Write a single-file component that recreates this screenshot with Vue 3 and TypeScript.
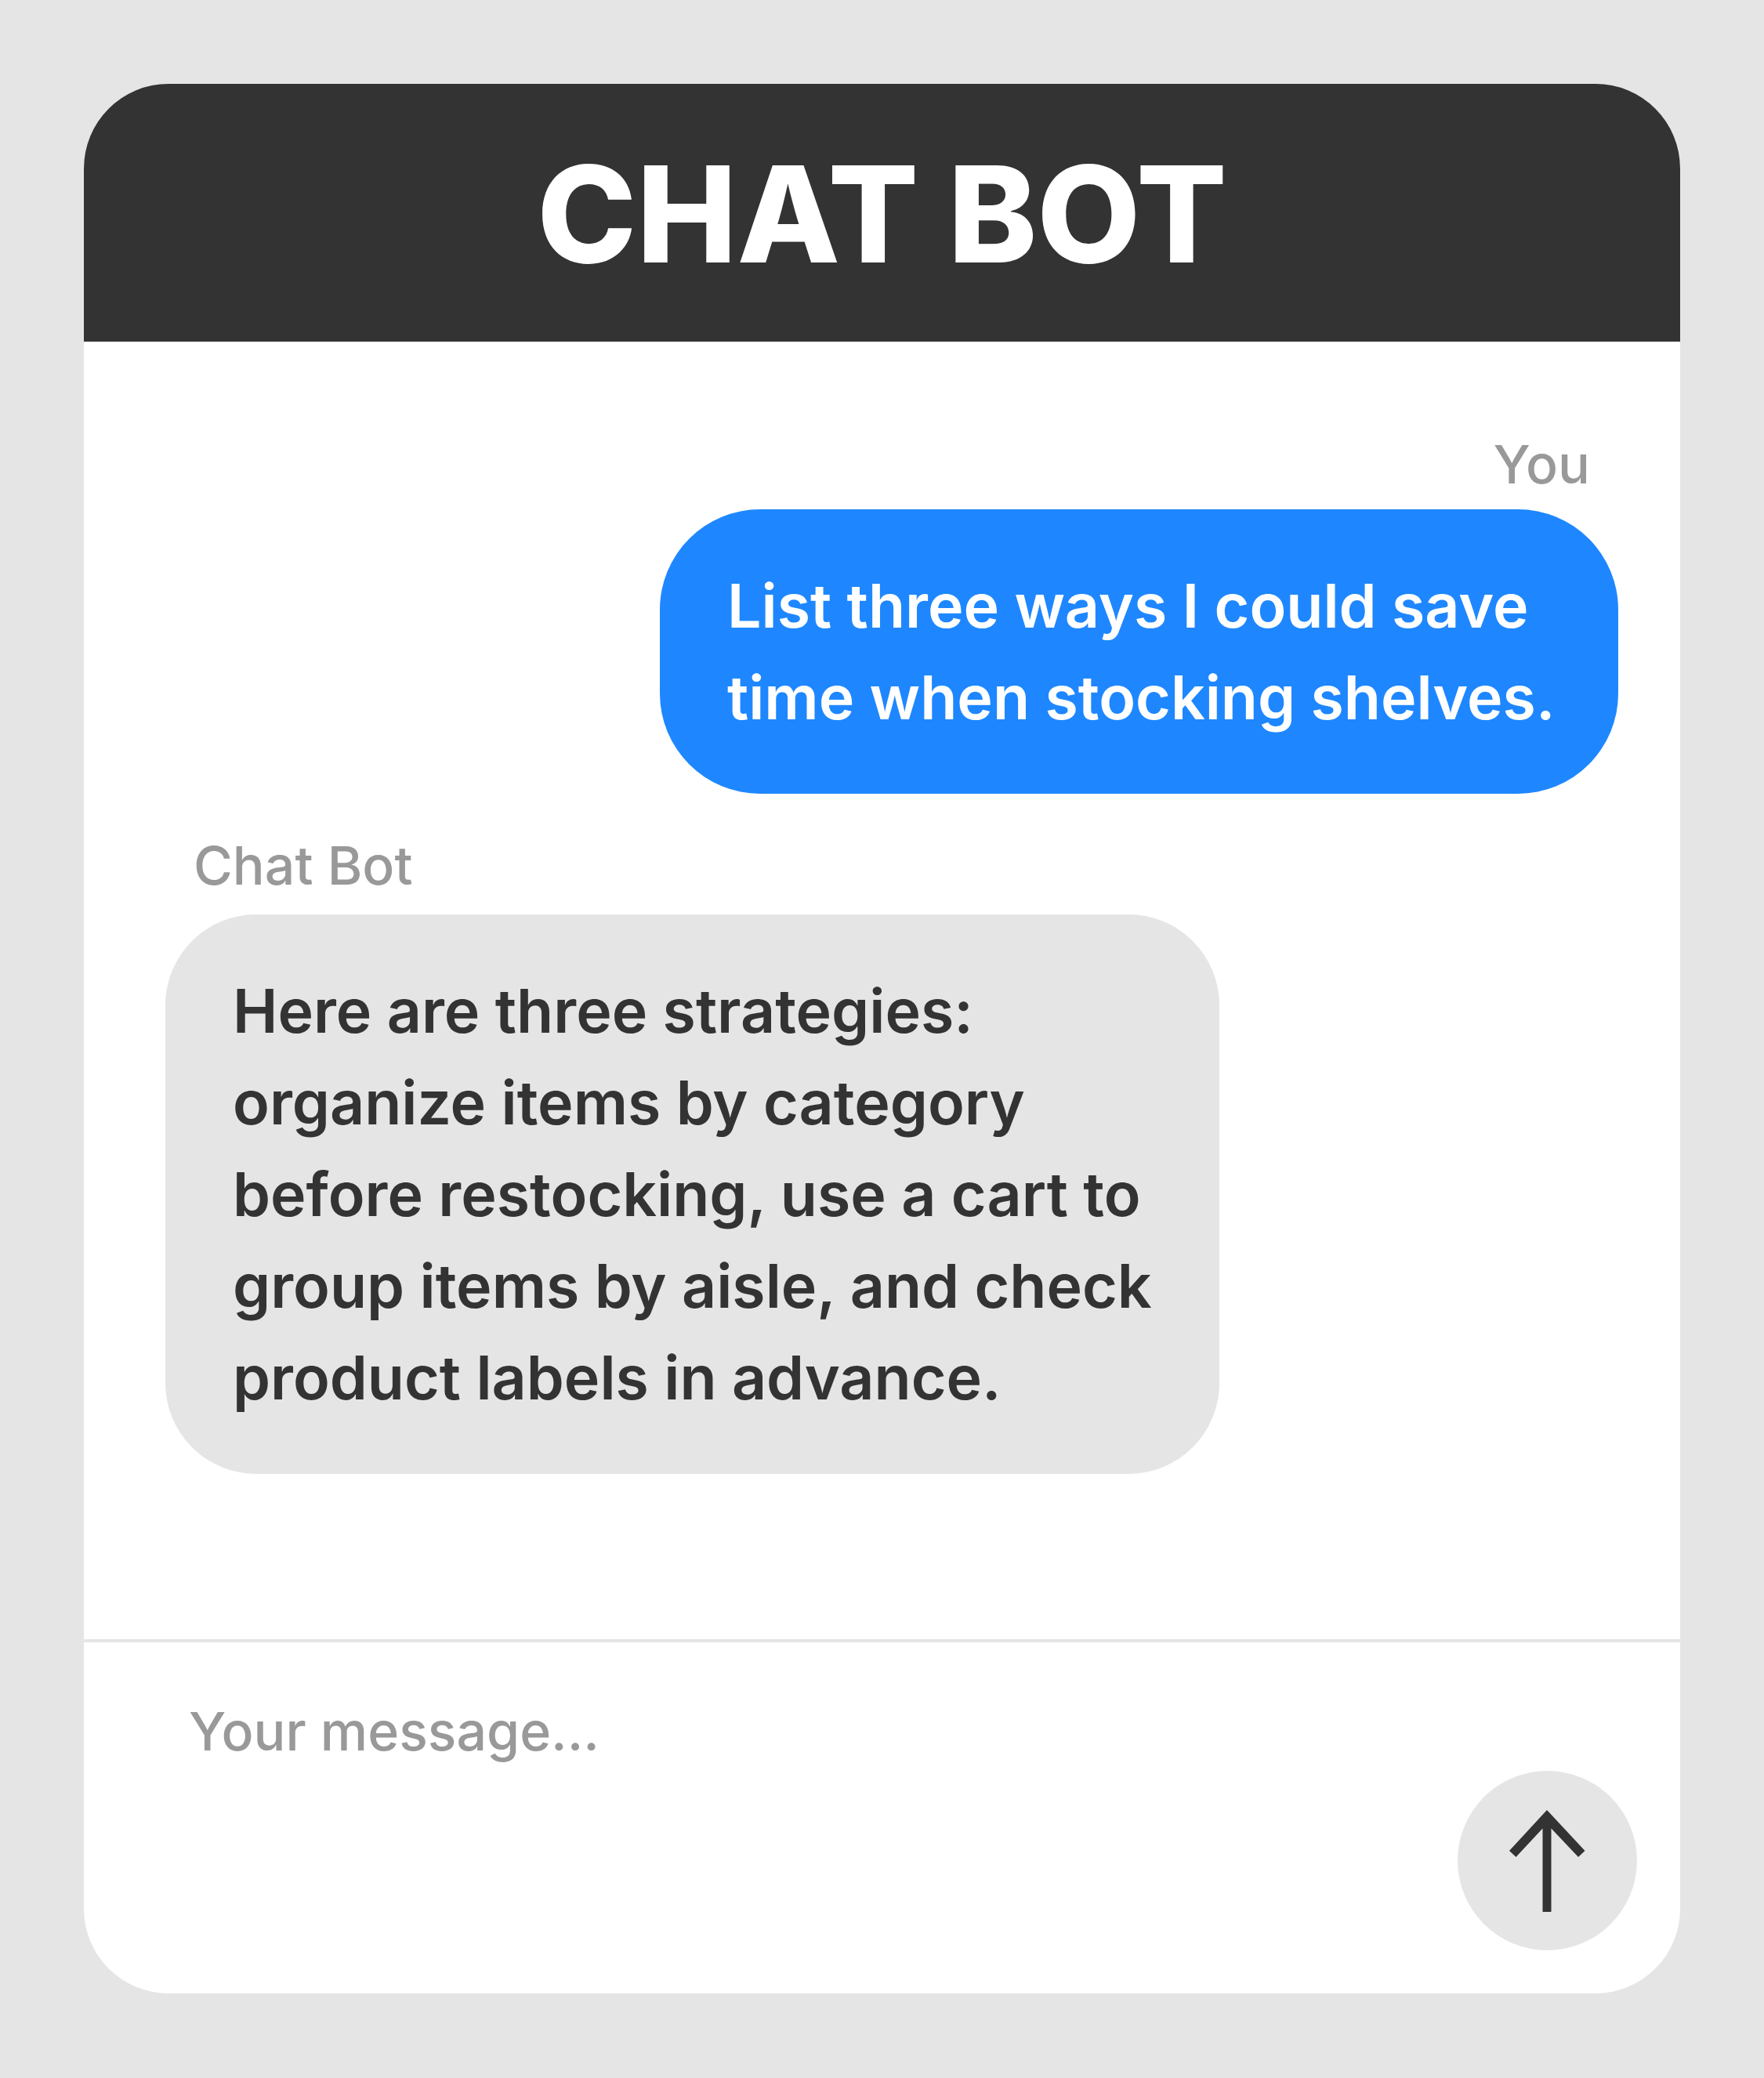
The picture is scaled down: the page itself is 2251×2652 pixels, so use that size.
<script setup lang="ts">
import { ref } from 'vue'

interface Message {
  id: number
  author: string
  role: 'user' | 'bot'
  text: string
}

const messages = ref<Message[]>([
  {
    id: 1,
    author: 'You',
    role: 'user',
    text: 'List three ways I could save time when stocking shelves.',
  },
  {
    id: 2,
    author: 'Chat Bot',
    role: 'bot',
    text: 'Here are three strategies: organize items by category before restocking, use a cart to group items by aisle, and check product labels in advance.',
  },
])

const draft = ref('')

function send(): void {
  const text = draft.value.trim()
  if (!text) return
  messages.value.push({ id: messages.value.length + 1, author: 'You', role: 'user', text })
  draft.value = ''
}
</script>

<template>
  <div class="page">
    <main class="card">
      <header class="header">
        <h1 class="title">CHAT BOT</h1>
      </header>

      <section class="conversation" aria-live="polite">
        <article v-for="m in messages" :key="m.id" class="message" :class="m.role">
          <h2 class="author">{{ m.author }}</h2>
          <p class="bubble">{{ m.text }}</p>
        </article>
      </section>

      <form class="composer" @submit.prevent="send">
        <textarea
          v-model="draft"
          class="input"
          aria-label="Your message"
          placeholder="Your message..."
        ></textarea>
        <button class="send" type="submit" aria-label="Send message">
          <svg class="arrow" viewBox="0 0 97 130" aria-hidden="true">
            <path
              d="M48 0 L96.500 52 L88 60 L53.500 23.500 L53.500 130 L42.500 130 L42.500 23.500 L8.500 60 L0 52 Z"
              fill="currentColor"
            />
          </svg>
        </button>
      </form>
    </main>
  </div>
</template>

<style>
body {
  margin: 0;
  background: #e5e5e5;
}
</style>

<style scoped>
.page {
  box-sizing: border-box;
  display: flex;
  min-height: 100vh;
  padding: 107px 107px 108px;
  background: #e5e5e5;
  color: #333;
  font-family: Inter, "Open Sans", sans-serif;
}

.card {
  display: flex;
  flex: 1;
  flex-direction: column;
  overflow: hidden;
  border-radius: 108px;
  background: #fff;
}

.header {
  padding: 64px 48px 61px;
  background: #333;
  color: #fff;
  text-align: center;
}

.title {
  margin: 0;
  font-size: 171px;
  font-weight: 800;
  line-height: 204px;
}

.conversation {
  display: flex;
  flex: 1;
  flex-direction: column;
  gap: 49px;
  padding: 114px 79px 120px 104px;
}

.message {
  display: flex;
  flex-direction: column;
  align-items: flex-start;
}

.message.user {
  align-items: flex-end;
}

.author {
  margin: 0 0 21px;
  padding: 0 36px;
  color: #999;
  font-size: 68px;
  font-weight: 500;
  line-height: 84px;
}

.user .author {
  margin-bottom: 16px;
}

.bubble {
  box-sizing: border-box;
  margin: 0;
  padding: 65px 76px 64px 86px;
  font-size: 77px;
  font-weight: 600;
  line-height: 117px;
}

.user .bubble {
  max-width: min(100%, 1223px);
  border-radius: 128px;
  background: #1e87ff;
  color: #fff;
}

.bot .bubble {
  max-width: min(100%, 1345px);
  border-radius: 116px;
  background: #e5e5e5;
}

.composer {
  display: flex;
  align-items: flex-end;
  gap: 40px;
  padding: 71px 55px 55px 134px;
  border-top: 4px solid #e5e5e5;
}

.input {
  flex: 1;
  height: 322px;
  padding: 0;
  border: 0;
  outline: 0;
  resize: none;
  background: transparent;
  color: #333;
  font-family: inherit;
  font-size: 68px;
  font-weight: 500;
  line-height: 84px;
}

.input::placeholder {
  color: #999;
  opacity: 1;
}

.send {
  display: flex;
  align-items: center;
  justify-content: center;
  width: 229px;
  height: 229px;
  padding: 0;
  border: 0;
  border-radius: 50%;
  background: #e5e5e5;
  color: #333;
  cursor: pointer;
}

.arrow {
  width: 97px;
  height: 130px;
}
</style>
